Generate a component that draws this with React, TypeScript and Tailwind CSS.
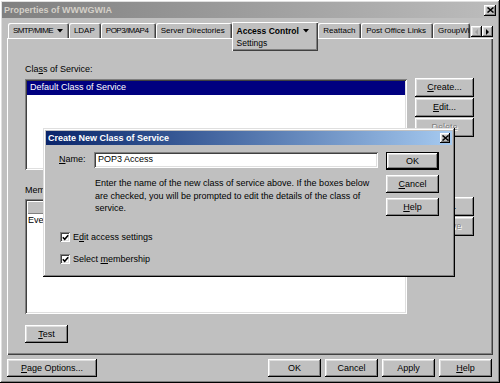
import React from 'react';

const raised =
  'shadow-[inset_-1px_-1px_#000000,inset_1px_1px_#ffffff,inset_-2px_-2px_#808080,inset_2px_2px_#dfdfdf]';
const sunken =
  'shadow-[inset_1px_1px_#808080,inset_-1px_-1px_#ffffff,inset_2px_2px_#404040,inset_-2px_-2px_#dfdfdf]';

const Btn: React.FC<{ className?: string; disabled?: boolean; children: React.ReactNode }> = ({
  className = '',
  disabled,
  children,
}) => (
  <div
    className={`flex items-center justify-center bg-[#c0c0c0] ${raised} ${className} ${
      disabled ? 'text-[#808080] [text-shadow:1px_1px_0_#ffffff]' : 'text-black'
    }`}
  >
    <span className="leading-none">{children}</span>
  </div>
);

const U: React.FC<{ children: React.ReactNode }> = ({ children }) => (
  <span className="underline underline-offset-1">{children}</span>
);

const CloseBox: React.FC<{ className?: string }> = ({ className = '' }) => (
  <div className={`flex items-center justify-center bg-[#c0c0c0] ${raised} ${className}`}>
    <svg width="7" height="6" viewBox="0 0 7 6">
      <path d="M0.5 0.5 L6.5 5.5 M6.5 0.5 L0.5 5.5" stroke="#000" strokeWidth="1.5" />
    </svg>
  </div>
);

const Caret = () => (
  <svg width="6" height="4" viewBox="0 0 6 4" className="ml-[4px] inline-block">
    <path d="M0 0 H6 L3 3.5 Z" fill="#000" />
  </svg>
);

const Check: React.FC<{ children: React.ReactNode; className?: string }> = ({ children, className = '' }) => (
  <div className={`flex items-center h-[13px] ml-[1px] ${className}`}>
    <div className={`w-[10px] h-[10px] bg-white flex items-center justify-center ${sunken}`}>
      <svg width="7" height="7" viewBox="0 0 7 7">
        <path d="M0.8 3.2 L2.7 5.2 L6.2 1.2" stroke="#000" strokeWidth="1.6" fill="none" />
      </svg>
    </div>
    <span className="ml-[3px] leading-none">{children}</span>
  </div>
);

const tabs = [
  { label: 'SMTP/MIME', w: 'w-[61px]', caret: true, tight: 'tracking-[-0.6px]' },
  { label: 'LDAP', w: 'w-[32px]', tight: '' },
  { label: 'POP3/IMAP4', w: 'w-[55px]', tight: 'tracking-[-0.5px]' },
  { label: 'Server Directories', w: 'w-[76px]', tight: '' },
  { label: 'ACCESS', w: 'w-[87px]', tight: '' },
  { label: 'Reattach', w: 'w-[43px]', tight: '' },
  { label: 'Post Office Links', w: 'w-[72px]', tight: '' },
  { label: 'GroupWise', w: 'w-[37px]', tight: '' },
];

export default function App() {
  return (
    <div
      className={`relative w-[500px] h-[383px] overflow-hidden bg-[#c0c0c0] flex flex-col p-[2px] font-['Liberation_Sans',Arial,sans-serif] text-[9px] text-black ${raised}`}
    >
      {/* Title bar */}
      <div className="h-[16px] flex items-center justify-between bg-linear-to-r from-[#808080] to-[#bcbcbc] pl-[2px] pr-[2px]">
        <span className="font-bold text-[#d4d0c8] leading-none">Properties of WWWGWIA</span>
        <CloseBox className="w-[12px] h-[11px]" />
      </div>

      <div className="flex flex-col px-[5px]">
        {/* Tabs */}
        <div className="mt-[4px] h-[16px] flex ml-[1px]">
          {tabs.map(t =>
            t.label === 'ACCESS' ? (
              <div
                key={t.label}
                className={`${t.w} h-[29px] self-start relative z-10 bg-[#c0c0c0] pl-[5px] pt-[3px] text-[8.5px] leading-[12px] shadow-[inset_1px_1px_#ffffff,inset_-1px_-1px_#404040,inset_-2px_-2px_#808080]`}
              >
                <div className="font-bold flex items-center whitespace-nowrap">
                  Access Control
                  <Caret />
                </div>
                <div>Settings</div>
              </div>
            ) : (
              <div
                key={t.label}
                className={`${t.w} ${t.tight} h-[15px] self-end flex items-center pl-[5px] overflow-hidden whitespace-nowrap text-[8px] rounded-t-[2px] shadow-[inset_1px_1px_#ffffff,inset_-1px_0_#404040,inset_-2px_0_#808080]`}
              >
                {t.label}
                {t.caret && <Caret />}
              </div>
            )
          )}
          <div className="self-end mb-[1px] ml-[1px] flex">
            <div className={`w-[11px] h-[11px] flex items-center justify-center ${raised}`}>
              <svg width="3" height="6" viewBox="0 0 3 6">
                <path d="M3 0 V6 L0 3 Z" fill="#a0a0a0" />
              </svg>
            </div>
            <div className={`w-[11px] h-[11px] flex items-center justify-center ${raised}`}>
              <svg width="3" height="6" viewBox="0 0 3 6">
                <path d="M0 0 V6 L3 3 Z" fill="#000" />
              </svg>
            </div>
          </div>
        </div>

        {/* Panel */}
        <div className="h-[317px] pt-[25px] px-[18px] shadow-[inset_1px_1px_#ffffff,inset_-1px_-1px_#404040,inset_-2px_-2px_#808080]">
          <div className="flex">
            <div className="w-[382px]">
              <div className="h-[13px] leading-[13px]">
                Cla<U>s</U>s of Service:
              </div>
              <div className={`mt-[3px] h-[91px] bg-white p-[2px] ${sunken}`}>
                <div className="h-[14px] bg-[#000080] text-white pl-[3px] flex items-center">
                  Default Class of Service
                </div>
              </div>
            </div>
            <div className="ml-[8px] pt-[15px] flex flex-col gap-[1px]">
              <Btn className="w-[59px] h-[19px]">
                <U>C</U>reate...
              </Btn>
              <Btn className="w-[59px] h-[19px]">
                <U>E</U>dit...
              </Btn>
              <Btn className="w-[59px] h-[19px]" disabled>
                <U>D</U>elete
              </Btn>
            </div>
          </div>

          <div className="flex mt-[14px]">
            <div className="w-[382px]">
              <div className="h-[13px] leading-[13px]">Members:</div>
              <div className={`mt-[2px] h-[115px] bg-white p-[2px] ${sunken}`}>
                <div className="h-[13px] bg-[#c0c0c0] shadow-[inset_1px_1px_#ffffff,inset_-1px_-1px_#808080]" />
                <div className="h-[13px] leading-[13px] pl-[1px]">Everyone</div>
              </div>
            </div>
            <div className="ml-[8px] pt-[13px] flex flex-col gap-[1px]">
              <Btn className="w-[59px] h-[19px]">
                <U>A</U>dd...
              </Btn>
              <Btn className="w-[59px] h-[19px]" disabled>
                <U>R</U>emove
              </Btn>
            </div>
          </div>

          <Btn className="mt-[11px] w-[43px] h-[18px]">
            <U>T</U>est
          </Btn>
        </div>

        {/* Bottom buttons */}
        <div className="mt-[4px] flex">
          <Btn className="w-[90px] h-[18px]">
            <U>P</U>age Options...
          </Btn>
          <div className="ml-auto mr-[1px] flex gap-[4px]">
            <Btn className="w-[53px] h-[18px]">OK</Btn>
            <Btn className="w-[53px] h-[18px]">Cancel</Btn>
            <Btn className="w-[53px] h-[18px]">Apply</Btn>
            <Btn className="w-[53px] h-[18px]">
              <U>H</U>elp
            </Btn>
          </div>
        </div>
      </div>

      {/* Dialog */}
      <div
        className={`absolute left-[43px] top-[128px] w-[412px] h-[149px] bg-[#c0c0c0] p-[3px] z-20 shadow-[inset_-1px_-1px_#000000,inset_1px_1px_#dfdfdf,inset_-2px_-2px_#808080,inset_2px_2px_#ffffff]`}
      >
        <div className="h-[14px] flex items-center justify-between bg-linear-to-r from-[#0a246a] to-[#a6caf0] pl-[2px] pr-[2px]">
          <span className="font-bold text-white leading-none">Create New Class of Service</span>
          <CloseBox className="w-[10px] h-[10px]" />
        </div>
        <div className="flex pt-[7px]">
          <div className="w-[332px] pl-[13px]">
            <div className="flex items-center h-[16px]">
              <span className="w-[35px]">
                <U>N</U>ame:
              </span>
              <div className={`w-[284px] h-[16px] bg-white pl-[4px] flex items-center ${sunken}`}>POP3 Access</div>
            </div>
            <div className="mt-[9px] ml-[36px] leading-[12.5px] whitespace-nowrap">
              Enter the name of the new class of service above. If the boxes below
              <br />
              are checked, you will be prompted to edit the details of the class of
              <br />
              service.
            </div>
            <Check className="mt-[16px]">
              E<U>d</U>it access settings
            </Check>
            <Check className="mt-[9px]">
              Select <U>m</U>embership
            </Check>
          </div>
          <div className="ml-[8px] flex flex-col gap-[5px]">
            <div className="w-[53px] h-[18px] border border-black">
              <Btn className="w-full h-full">OK</Btn>
            </div>
            <Btn className="w-[53px] h-[18px]">
              <U>C</U>ancel
            </Btn>
            <Btn className="w-[53px] h-[18px]">
              <U>H</U>elp
            </Btn>
          </div>
        </div>
      </div>
    </div>
  );
}
